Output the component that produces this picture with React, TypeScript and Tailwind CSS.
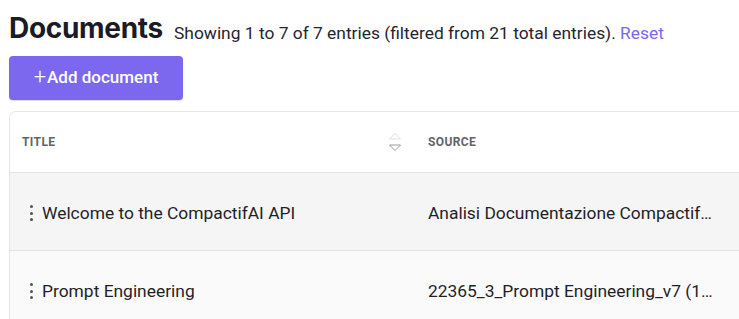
import React from "react";

type Doc = { title: string; source: string; bg: string };

const docs: Doc[] = [
  {
    title: "Welcome to the CompactifAI API",
    source: "Analisi Documentazione CompactifAI API e integrazione.pdf",
    bg: "bg-[#f5f5f5]",
  },
  {
    title: "Prompt Engineering",
    source: "22365_3_Prompt Engineering_v7 (1).pdf",
    bg: "bg-[#fafafa]",
  },
];

const SortIcon = () => (
  <svg width="14" height="22" viewBox="0 0 14 22" fill="none">
    <path d="M1.5 8 L7 2.5 L12.5 8 Z" stroke="#e0e0e3" strokeWidth="1" />
    <path d="M1.5 14 L7 19.5 L12.5 14 Z" stroke="#9a9aa2" strokeWidth="1" />
  </svg>
);

const Kebab = () => (
  <div className="flex flex-col items-center gap-[3.5px] w-[4px]">
    <span className="block w-[3px] h-[3px] rounded-full bg-[#55545e]" />
    <span className="block w-[3px] h-[3px] rounded-full bg-[#55545e]" />
    <span className="block w-[3px] h-[3px] rounded-full bg-[#55545e]" />
  </div>
);

export default function App() {
  return (
    <div className="w-[739px] h-[319px] overflow-hidden bg-white font-['Roboto',sans-serif] text-[#1f1f29]">
      <div className="flex items-end pl-[9px] pt-[11px] h-[45px]">
        <h1 className="font-['Inter',sans-serif] font-bold text-[28px] leading-[34px] tracking-[-0.3px] text-[#1c1b25]">
          Documents
        </h1>
        <p className="ml-[11px] mb-[2px] text-[17.4px] leading-[20px] text-[#26252f]">
          Showing 1 to 7 of 7 entries (filtered from 21 total entries).{" "}
          <span className="text-[#7b68ee]">Reset</span>
        </p>
      </div>

      <button className="ml-[9px] mt-[11px] w-[174px] h-[44px] rounded-[4px] bg-[#7b68ee] text-white text-[17px] flex items-center justify-center shadow-[0_1px_1px_rgba(0,0,0,0.15)]">
        <span className="font-light text-[22px] leading-none mr-[1px] -mt-[2px]">+</span>
        <span className="font-medium">Add document</span>
      </button>

      <div className="ml-[9px] mt-[11px] border border-[#e6e6e9] rounded-tl-[7px] border-r-0 overflow-hidden">
        <div className="flex items-center h-[61px] border-b border-[#e4e4e7] bg-white">
          <div className="w-[405px] flex items-center justify-between pl-[12px] pr-[13px]">
            <span className="text-[12px] font-bold tracking-[0.4px] text-[#64636b]">TITLE</span>
            <SortIcon />
          </div>
          <span className="pl-[13px] text-[12px] font-bold tracking-[0.4px] text-[#64636b]">SOURCE</span>
        </div>
        {docs.map((d) => (
          <div key={d.title} className={`flex items-center h-[78px] pt-[4px] border-b border-[#e4e4e7] ${d.bg}`}>
            <div className="w-[405px] flex items-center pl-[19px] gap-[9px]">
              <Kebab />
              <span className="text-[17.4px] text-[#1f1f29] truncate">{d.title}</span>
            </div>
            <span className="pl-[13px] w-[300px] text-[17.4px] text-[#1f1f29] truncate">{d.source}</span>
          </div>
        ))}
      </div>
    </div>
  );
}
